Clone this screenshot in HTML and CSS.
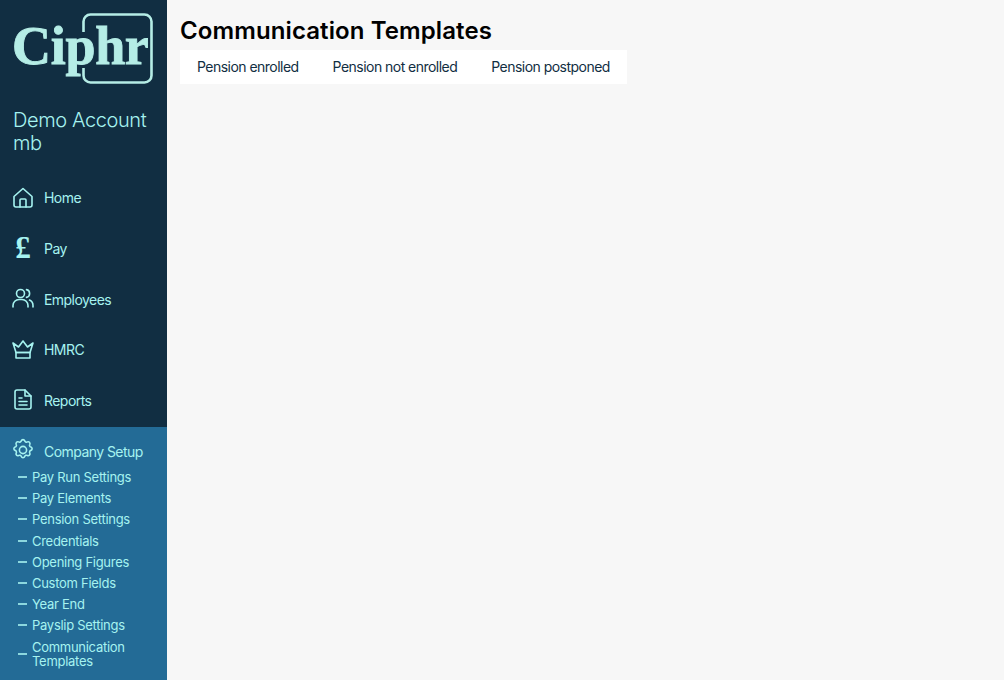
FILE: index.html
```html
<!DOCTYPE html>
<html lang="en">
<head>
  <meta charset="UTF-8" />
  <title>Communication Templates</title>
  <link rel="stylesheet" href="styles.css">
</head>
<body>
  <div class="layout">
    <aside class="sidebar">
      <div class="logo">
        <span class="logo-text">Ciphr</span>
        <svg class="logo-box" width="72" height="72" viewBox="0 0 72 72" fill="none" stroke="#b5ede6" stroke-width="2.6">
          <path d="M1.500 19V8.500a7 7 0 0 1 7-7h54a7 7 0 0 1 7 7v54a7 7 0 0 1-7 7h-54a7 7 0 0 1-7-7V55" />
        </svg>
      </div>
      <div class="account-name">Demo Account mb</div>

      <nav class="nav">
        <a class="nav-item">
          <svg class="nav-icon" viewBox="0 0 24 24"><path d="M3 10.500 12 2.500l9 8V19a2 2 0 0 1-2 2H5a2 2 0 0 1-2-2z" /><path d="M9 21v-7a1 1 0 0 1 1-1h4a1 1 0 0 1 1 1v7" /></svg>
          Home
        </a>
        <a class="nav-item">
          <span class="nav-icon pound">£</span>
          Pay
        </a>
        <a class="nav-item">
          <svg class="nav-icon" viewBox="0 0 24 24"><circle cx="9.500" cy="6.500" r="4" /><path d="M2 20v-1.500a6 6 0 0 1 6-6h3a6 6 0 0 1 6 6V20" /><path d="M15.500 2.600a4 4 0 0 1 0 7.800" /><path d="M22 20v-1.500a6 6 0 0 0-3.500-5.400" /></svg>
          Employees
        </a>
        <a class="nav-item">
          <svg class="nav-icon" viewBox="0 0 24 24"><path d="M5 14.500 2 5l5.500 4L12 3l4.500 6L22 5l-3 9.500z" /><path d="M5 14.500h14V20H5z" /></svg>
          HMRC
        </a>
        <a class="nav-item">
          <svg class="nav-icon" viewBox="0 0 24 24"><path d="M14 2H6a2 2 0 0 0-2 2v15a2 2 0 0 0 2 2h12a2 2 0 0 0 2-2V8z" /><path d="M14 2v6h6" /><path d="M8 10h3M8 13.500h8M8 17h8" /></svg>
          Reports
        </a>
      </nav>

      <div class="setup">
        <a class="nav-item setup-head">
          <svg class="nav-icon" viewBox="0 0 24 24"><circle cx="12" cy="12" r="3.600" /><path d="M10.300 2.800a1.800 1.800 0 0 1 3.400 0 1.800 1.800 0 0 0 2.700 1.100 1.800 1.800 0 0 1 2.400 2.400 1.800 1.800 0 0 0 1.100 2.700 1.800 1.800 0 0 1 0 3.400 1.800 1.800 0 0 0-1.100 2.700 1.800 1.800 0 0 1-2.400 2.400 1.800 1.800 0 0 0-2.700 1.100 1.800 1.800 0 0 1-3.400 0 1.800 1.800 0 0 0-2.700-1.100 1.800 1.800 0 0 1-2.400-2.400 1.800 1.800 0 0 0-1.100-2.700 1.800 1.800 0 0 1 0-3.400 1.800 1.800 0 0 0 1.100-2.700 1.800 1.800 0 0 1 2.400-2.400 1.800 1.800 0 0 0 2.700-1.100z" /></svg>
          Company Setup
        </a>
        <ul class="sub-list">
          <li>Pay Run Settings</li>
          <li>Pay Elements</li>
          <li>Pension Settings</li>
          <li>Credentials</li>
          <li>Opening Figures</li>
          <li>Custom Fields</li>
          <li>Year End</li>
          <li>Payslip Settings</li>
          <li>Communication Templates</li>
        </ul>
      </div>
    </aside>

    <main class="content">
      <h1 class="title">Communication Templates</h1>
      <div class="tabs">
        <a class="tab">Pension enrolled</a>
        <a class="tab">Pension not enrolled</a>
        <a class="tab">Pension postponed</a>
      </div>
    </main>
  </div>
</body>
</html>
```
FILE: styles.css
```css
html, body {
  height: 100%;
}

body {
  margin: 0;
  background-color: #f7f7f7;
  color: #112e42;
  font-family: Inter, "Open Sans", sans-serif;
  overflow: hidden;
}

.layout {
  display: flex;
  height: 680px;
}

.sidebar {
  width: 167px;
  flex-shrink: 0;
  display: flex;
  flex-direction: column;
  background-color: #112e42;
  color: #a6f3f0;
}

.logo {
  position: relative;
  height: 84px;
  margin-bottom: 25px;
}

.logo-text {
  position: absolute;
  left: 12px;
  top: 15px;
  font-family: "Liberation Serif", serif;
  font-weight: bold;
  font-size: 54px;
  line-height: 62px;
  letter-spacing: -0.3px;
  color: #b5ede6;
  -webkit-text-stroke: 0.9px #b5ede6;
}

.logo-box {
  position: absolute;
  left: 82px;
  top: 13px;
}

.account-name {
  padding: 0 13px;
  font-size: 20px;
  line-height: 23px;
  letter-spacing: -0.4px;
  font-weight: 300;
  margin-bottom: 17.4px;
}

.nav {
  display: flex;
  flex-direction: column;
  margin-bottom: 1.6px;
}

.nav-item {
  display: flex;
  align-items: center;
  gap: 9px;
  height: 50.7px;
  padding-left: 11px;
  font-size: 14px;
  letter-spacing: -0.55px;
}

.nav-icon {
  width: 24px;
  height: 24px;
  flex-shrink: 0;
  fill: none;
  stroke: #a6f3f0;
  stroke-width: 1.6;
  stroke-linecap: round;
  stroke-linejoin: round;
}

.pound {
  font-family: "Liberation Serif", serif;
  font-weight: bold;
  font-size: 31px;
  line-height: 24px;
  letter-spacing: 0;
  text-align: center;
}

.setup {
  flex: 1;
  background-color: #236b96;
}

.setup-head {
  height: 39px;
  padding-top: 10px;
  box-sizing: border-box;
}

.setup-head .nav-icon {
  margin-top: -3px;
}

.sub-list {
  list-style: none;
  margin: 0;
  padding: 0 30px 0 18px;
  font-size: 13px;
  line-height: 14px;
  letter-spacing: -0.28px;
}

.sub-list li {
  display: flex;
  align-items: center;
  gap: 5px;
  padding: 3.6px 0;
}

.sub-list li::before {
  content: "";
  width: 9px;
  height: 2px;
  flex-shrink: 0;
  background-color: #a6f3f0;
  opacity: 0.8;
}

.content {
  flex: 1;
  padding: 16px 13px;
}

.title {
  margin: 0 0 4px;
  color: #000;
  font-size: 24px;
  line-height: 30px;
  font-weight: 600;
  letter-spacing: 0.1px;
}

.tabs {
  display: inline-flex;
  background-color: #fff;
}

.tab {
  padding: 9px 17px;
  font-size: 14px;
  line-height: 15.500px;
  letter-spacing: -0.53px;
}
```
